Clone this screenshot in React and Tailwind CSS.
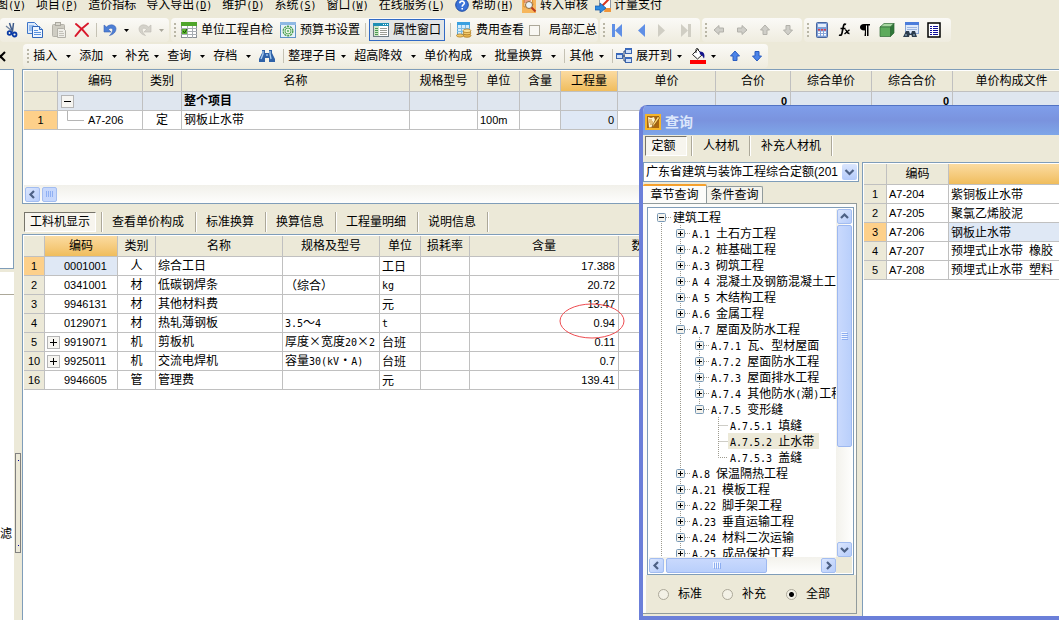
import React from "react";

const FONT = "font-['Liberation_Sans','Noto_Sans_CJK_SC',sans-serif]";

/* ---------- small text helpers ---------- */

function Latin({ children, className = "" }) {
  return (
    <span className={`font-['DejaVu_Sans_Mono',monospace] text-[10px] ${className}`}>{children}</span>
  );
}

function Mixed({ text }) {
  const parts = text.match(/[\x20-\x7e]+|[^\x20-\x7e]+/g) || [];
  return parts.map((part, i) =>
    /^[\x20-\x7e]+$/.test(part) ? (
      <Latin key={i} className="whitespace-pre">{part}</Latin>
    ) : (
      <span key={i} className="font-['Noto_Sans_CJK_SC',sans-serif]">{part}</span>
    )
  );
}

/* ---------- icons ---------- */

function Svg({ w = 16, h = 16, children, label }) {
  return (
    <svg width={w} height={h} viewBox={`0 0 ${w} ${h}`} className="shrink-0" aria-hidden={!label} aria-label={label}>
      {children}
    </svg>
  );
}

const Arrow = ({ color = "#000" }) => (
  <Svg w={5} h={3}><path d="M0 0h5L2.5 3z" fill={color} /></Svg>
);

const CutIcon = () => (
  <Svg>
    <path d="M5.500 1l3 9M9.500 1l-1 8" stroke="#3c5a8c" strokeWidth="1.500" fill="none" />
    <path d="M2 4l6 5" stroke="#6b7f9e" strokeWidth="1.200" />
    <circle cx="5.500" cy="11" r="1.800" fill="none" stroke="#0a3ba6" strokeWidth="1.800" />
    <circle cx="10.500" cy="12.500" r="2" fill="none" stroke="#0a3ba6" strokeWidth="1.800" />
  </Svg>
);
const CopyIcon = () => (
  <Svg>
    <path d="M.5.5h7l3 3v8H.5z" fill="#dceafc" stroke="#3f76c9" />
    <path d="M2 4h5M2 6h6M2 8h6" stroke="#5b93dd" />
    <path d="M5.500 4.500h7l3 3v8h-10z" fill="#eef5ff" stroke="#3066b9" />
    <path d="M12.500 4.500v3h3" fill="#bcd4f5" stroke="#3066b9" />
    <path d="M7 8.500h4M7 10.500h7M7 12.500h7" stroke="#5b93dd" />
  </Svg>
);
const PasteIcon = () => (
  <Svg>
    <rect x="1.500" y="2.500" width="12" height="12" rx="1" fill="#cfcdc3" stroke="#b3b1a8" />
    <rect x="4.500" y=".5" width="5" height="3" fill="#d9d7ce" stroke="#aaa89f" />
    <path d="M6.500 6.500h6l2 2v7h-8z" fill="#efeee8" stroke="#b3b1a8" />
    <path d="M8 9.500h4M8 11.500h5M8 13.500h5" stroke="#c4c2b9" />
  </Svg>
);
const DeleteIcon = () => (
  <Svg>
    <path d="M2 2c4 3 8 7 12 12M14 1.500C9 5 5 9 1.500 14" stroke="#d9182b" strokeWidth="2" fill="none" strokeLinecap="round" />
  </Svg>
);
const UndoIcon = ({ fill = "#4d7fd6", edge = "#3a62b4", flip }) => (
  <Svg w={14}>
    <path
      transform={flip ? "matrix(-1 0 0 1 14 0)" : undefined}
      d="M1 3v7h7L5.500 7.500C8 5 10.500 6.500 9.500 9 9.200 10.500 8 12 6.500 13.500c4-1 6.500-3.500 6.500-7C12.500 2.500 7 1.500 3.500 5z"
      fill={fill} stroke={edge} strokeWidth=".6"
    />
  </Svg>
);
const CheckSheetIcon = () => (
  <Svg>
    <rect x=".5" y=".5" width="15" height="15" fill="#fff" stroke="#8a8f94" />
    <rect x="0" y="0" width="16" height="4" fill="#4fa52b" />
    <path d="M0 6.500h16M0 9.500h16M0 12.500h16M6.500 4v12M11.500 4v12" stroke="#a7adb2" />
    <rect x="1" y="7" width="5" height="5" fill="#5cb531" />
    <path d="M2 9l1.500 2L6 7" stroke="#164f05" fill="none" />
  </Svg>
);
const GearSheetIcon = () => (
  <Svg>
    <rect x=".5" y=".5" width="15" height="15" fill="#e6f1fa" stroke="#5f93c6" />
    <rect x="0" y="0" width="16" height="3" fill="#8fb9e4" />
    <circle cx="8" cy="9" r="4.800" fill="#e8f6e4" stroke="#4a9d52" strokeWidth="1.400" strokeDasharray="2.200 .8" />
    <circle cx="8" cy="9" r="3" fill="none" stroke="#5aaa61" />
    <circle cx="8" cy="9" r="1" fill="#5aaa61" />
  </Svg>
);
const PropertyIcon = () => (
  <Svg>
    <rect x=".5" y="1.500" width="15" height="13" fill="#fff" stroke="#6d7b84" />
    <rect x="0" y="1" width="16" height="3" fill="#1f8fb5" />
    <path d="M10 2.500h1M12 2.500h1M14 2.500h1" stroke="#fff" />
    <rect x="1" y="4" width="5" height="10" fill="#cfe6c8" />
    <path d="M2 6.500h3M2 8.500h3M2 10.500h3M2 12.500h3" stroke="#4b9a52" />
    <path d="M7 6.500h7M7 8.500h7M7 10.500h7M7 12.500h7" stroke="#9a9c94" />
  </Svg>
);
const FeeIcon = () => (
  <Svg>
    <rect x="1.500" y=".5" width="12" height="12" fill="#d5ecfb" stroke="#57a9dd" />
    <rect x="1" y="0" width="13" height="3" fill="#39a0e0" />
    <path d="M1 6.500h13M1 9.500h13M5.500 3v10M9.500 3v10" stroke="#7cbde6" />
    <ellipse cx="11" cy="13.500" rx="4" ry="1.800" fill="#e8b54e" stroke="#a8741b" strokeWidth=".7" />
    <ellipse cx="11" cy="11" rx="4" ry="1.800" fill="#f3cb6c" stroke="#a8741b" strokeWidth=".7" />
    <ellipse cx="11" cy="8.800" rx="4" ry="1.800" fill="#fbe097" stroke="#a8741b" strokeWidth=".7" />
    <ellipse cx="4" cy="13.500" rx="3.500" ry="1.600" fill="#f3cb6c" stroke="#a8741b" strokeWidth=".7" />
  </Svg>
);
const HelpIcon = () => (
  <Svg w={14} h={14}>
    <circle cx="7" cy="7" r="6.300" fill="#3a72d8" stroke="#1f4ba3" />
    <path d="M4.800 5.300c.2-3 4.700-2.700 4.500 0C9.200 6.800 7.200 6.700 7.200 8.700M7.200 10v1.500" stroke="#fff" strokeWidth="1.600" fill="none" />
  </Svg>
);
const AuditIcon = () => (
  <Svg>
    <rect x="1" y="3" width="14" height="13" fill="#f6b65c" />
    <path d="M3 0h8l1 8-9 2z" fill="#fff4dc" stroke="#d88b2a" />
    <path d="M3 3h7M3 5h6" stroke="#d94f2a" />
    <circle cx="8" cy="8" r="3.500" fill="#e9f3fb" stroke="#8d6a3c" />
    <path d="M10.500 10.500l4 4" stroke="#b93a1c" strokeWidth="2" />
  </Svg>
);
const PayIcon = () => (
  <Svg>
    <rect x="4.500" y=".5" width="11" height="12" fill="#fff" stroke="#8e98a6" />
    <path d="M6 10L14 2" stroke="#d9361e" strokeWidth="2" />
    <path d="M10 11h6v4H9z" fill="#f0953a" />
    <path d="M0 9h5V6l6 5-6 5v-3H0z" fill="#2f8be0" stroke="#1458a8" strokeWidth=".7" />
  </Svg>
);
const NavIcon = ({ bar, right, color }) => (
  <Svg w={12} h={13}>
    <g transform={right ? "matrix(-1 0 0 1 12 0)" : undefined} fill={color}>
      {bar && <rect x="1" y="0" width="3" height="13" />}
      <path d="M11 0v13L4 6.500z" />
    </g>
  </Svg>
);
const ArrowIcon = ({ turn = 0, fill = "#cfcec8", edge = "#b2b1aa" }) => (
  <Svg w={12} h={12}>
    <path transform={`rotate(${turn} 6 6)`} d="M6 1l4.500 5H8v4.500H4V6H1.500z" fill={fill} stroke={edge} />
  </Svg>
);
const CalcIcon = () => (
  <Svg w={14}>
    <rect x="1.500" y=".5" width="11" height="15" rx="1" fill="#7fa0d8" stroke="#48679f" />
    <rect x="3" y="2" width="8" height="3" fill="#e4eefb" />
    {[7, 9.5, 12].map((y) => [3, 6, 9].map((x) => (
      <rect key={`${x}-${y}`} x={x} y={y} width="2" height="1.600" fill={y === 7 ? "#d9404a" : "#fff"} />
    )))}
  </Svg>
);
const FxIcon = () => (
  <Svg w={14}>
    <path d="M9 2.500C6.500 1 6.500 4 5.500 8.500 5 12 4.500 14 2 13M3.500 6.500h5" stroke="#000" strokeWidth="1.700" fill="none" />
    <path d="M8 8c2-1 1.500 4 4.500 3.500M12.500 7.800L7.500 12" stroke="#000" strokeWidth="1.400" fill="none" />
  </Svg>
);
const ParaIcon = () => (
  <Svg w={12} h={14}>
    <path d="M6 7.500C-.5 8-.5 1 5 1h6v1.500H9.500V13H8V2.500H7V13H5.500z" fill="#000" />
  </Svg>
);
const CubeIcon = () => (
  <Svg>
    <path d="M1 5l4-3.500h10L11.500 5z" fill="#a7d8a0" stroke="#2f6a35" strokeWidth=".7" />
    <path d="M1 5h10.500v9.500H1z" fill="#5eab5c" stroke="#2f6a35" strokeWidth=".7" />
    <path d="M11.500 5L15 1.500V11l-3.500 3.500z" fill="#2f7638" stroke="#2f6a35" strokeWidth=".7" />
  </Svg>
);
const FindSheetIcon = () => (
  <Svg>
    <rect x="2.500" y=".5" width="13" height="11" fill="#dfeafa" stroke="#88a5d4" />
    <rect x="2" y="0" width="14" height="3" fill="#4b7ddb" />
    <path d="M4 5.500h10M4 7.500h10" stroke="#9cb6e2" />
    <path d="M3 9h3l1 3h1l1-3h3l2 6H9l-.5-2h-2L6 15H0z" fill="#2d3d4d" />
    <path d="M2 13h2M10 13h2" stroke="#9fc2dc" />
  </Svg>
);
const ListIcon = () => (
  <Svg w={14}>
    <rect x="1" y="1" width="12" height="14" fill="#fff" stroke="#000" strokeWidth="1.500" />
    <path d="M3 4.500h2M6 4.500h5M3 6.500h2M6 6.500h5M3 8.500h2M6 8.500h5M3 10.500h2M6 10.500h5M3 12.500h2M6 12.500h5" stroke="#10109a" />
  </Svg>
);
const BinocularsIcon = () => (
  <Svg>
    <path d="M3 2h3v3h4V2h3v3l3 6v3h-6v-4H6v4H0v-3l3-6z" fill="#2f62a8" />
    <path d="M4 3v3L2 11M11 3v3l1 5" stroke="#a9cdf2" strokeWidth="1.300" fill="none" />
    <path d="M7 6h2v2H7z" fill="#7fa9dc" />
  </Svg>
);
const ExpandIcon = () => (
  <Svg>
    <path d="M5 8h4M8 3v10M8 3h2M8 13h2" stroke="#1e3f77" fill="none" />
    {[[0.5, 5.5], [9.5, 0.5], [9.5, 9.5]].map(([x, y]) => (
      <g key={`${x}-${y}`}>
        <rect x={x} y={y} width="6" height="5" fill="#cfe0f8" stroke="#3a64ac" />
        <rect x={x} y={y} width="6" height="1.500" fill="#3a6cc4" />
      </g>
    ))}
  </Svg>
);
const PaintIcon = () => (
  <Svg>
    <path d="M2.500 6.500l5-5 5 5-5 4.500z" fill="#fff" stroke="#222" />
    <path d="M6 5V1.500C6 0 8.500 0 8.500 2" stroke="#222" fill="none" />
    <path d="M9.500 3.500c4-.5 6 3 4.500 7-1-1-1.500-4-4-4z" fill="#12128a" />
    <rect x="0" y="12" width="16" height="4" fill="#f00" />
  </Svg>
);
const AppIcon = () => (
  <Svg>
    <rect x="1" y="1" width="14" height="14" fill="#a8650f" stroke="#f5b52b" strokeWidth="2" />
    <path d="M3 3l3 1 3-1 1 3-2 7-4 .5z" fill="#fff3cc" />
    <path d="M4 6h3M4 8h4M5 10h3" stroke="#c98a2a" />
    <path d="M13 2L8 10l-1 3 2.500-2L14.500 4z" fill="#ffd873" stroke="#6b3a05" strokeWidth=".6" />
  </Svg>
);

function ExpandBox({ open }) {
  return (
    <Svg w={9} h={9}>
      <rect x=".5" y=".5" width="8" height="8" rx="1" fill="#f4f2ec" stroke="#7898b5" />
      <path d={open ? "M2 4.500h5" : "M2 4.500h5M4.500 2v5"} stroke="#000" />
    </Svg>
  );
}
function GridBox({ open }) {
  return (
    <Svg w={13} h={13}>
      <rect x=".5" y=".5" width="12" height="12" fill="#f6f5f1" stroke="#b5b5b5" />
      <path d={open ? "M3 6.500h7" : "M3 6.500h7M6.500 3v7"} stroke="#000" />
    </Svg>
  );
}

/* ---------- menu and toolbars ---------- */

const MENUS = [
  { text: "图", key: "V" },
  { text: "项目", key: "P" },
  { text: "造价指标" },
  { text: "导入导出", key: "D" },
  { text: "维护", key: "D" },
  { text: "系统", key: "S" },
  { text: "窗口", key: "W" },
  { text: "在线服务", key: "L" },
  { text: "帮助", key: "H", icon: HelpIcon },
  { text: "转入审核", icon: AuditIcon },
  { text: "计量支付", icon: PayIcon },
];

function MenuBar() {
  return (
    <nav className="-ml-1 flex h-[18px] shrink-0 items-end gap-[10px] pb-[7px]">
      {MENUS.map(({ text, key, icon: Icon }, i) => (
        <button key={i} type="button" className={`flex h-3 shrink-0 items-center gap-[3px] leading-3 ${Icon && !key ? "-ml-[3px]" : ""}`}>
          {Icon && <Icon />}
          <span>
            {text}
            {key && <Latin>(<u>{key}</u>)</Latin>}
          </span>
        </button>
      ))}
    </nav>
  );
}

const Grip = () => (
  <span className="h-[14px] w-[2px] shrink-0 bg-[repeating-linear-gradient(#b9b6a6_0_2px,transparent_2px_4px)]" />
);
const Sep = () => <span className="h-[14px] w-px shrink-0 bg-[#c5c2b4]" />;

function Band({ children, className = "" }) {
  return (
    <div className={`flex h-6 shrink-0 items-center rounded-sm bg-linear-to-b from-[#fbfaf7] to-[#efecdf] ${className}`}>
      {children}
    </div>
  );
}

function Tool({ label, children, className = "" }) {
  return (
    <button type="button" aria-label={label} className={`flex h-5 shrink-0 items-center justify-center ${className}`}>
      {children}
    </button>
  );
}

function MainToolbar() {
  return (
    <div className="flex shrink-0 gap-[2px]">
      <Band className="w-[169px] pl-[2px]">
        <Tool label="剪切" className="w-[20px]"><CutIcon /></Tool>
        <Tool label="复制" className="w-[25px]"><CopyIcon /></Tool>
        <Tool label="粘贴" className="w-[23px]"><PasteIcon /></Tool>
        <Tool label="删除" className="w-[23px]"><DeleteIcon /></Tool>
        <span className="w-[3px]" />
        <Sep />
        <Tool label="撤销" className="w-[34px] gap-[7px] pl-1"><UndoIcon /><Arrow /></Tool>
        <Tool label="重做" className="w-[36px] gap-[7px] pl-1"><UndoIcon flip fill="#d4d2ca" edge="#bdbbb2" /><Arrow color="#a9a79b" /></Tool>
      </Band>
      <Band className="w-[427px] gap-[5px] pl-[3px]">
        <Grip />
        <Tool className="gap-1"><CheckSheetIcon />单位工程自检</Tool>
        <Tool className="gap-1 pl-[2px]"><GearSheetIcon />预算书设置</Tool>
        <Sep />
        <button type="button" aria-pressed="true" className="-ml-[2px] flex h-[22px] shrink-0 items-center gap-1 border border-[#316ac5] bg-[#e2e5e6] px-[3px]">
          <PropertyIcon />属性窗口
        </button>
        <Sep />
        <Tool className="gap-1"><FeeIcon />费用查看</Tool>
        <label className="flex items-center gap-[9px]">
          <input type="checkbox" className="size-[11px] shrink-0 appearance-none border border-[#aca899] bg-[#f8f7f2]" />
          局部汇总
        </label>
      </Band>
      <Band className="w-[100px] gap-[11px] pl-[3px]">
        <Grip />
        <Tool label="首条" className="-ml-[5px]"><NavIcon bar color="#5f8fe6" /></Tool>
        <Tool label="上一条"><NavIcon color="#5f8fe6" /></Tool>
        <Tool label="下一条"><NavIcon right color="#d0cec4" /></Tool>
        <Tool label="末条"><NavIcon bar right color="#d0cec4" /></Tool>
      </Band>
      <Band className="w-[100px] gap-[11px] pl-[3px]">
        <Grip />
        <Tool label="左移" className="-ml-[5px]"><ArrowIcon turn={270} /></Tool>
        <Tool label="右移"><ArrowIcon turn={90} /></Tool>
        <Tool label="上移"><ArrowIcon /></Tool>
        <Tool label="下移"><ArrowIcon turn={180} /></Tool>
      </Band>
      <Band className="w-[147px] gap-[8px] pl-[3px]">
        <Grip />
        <Tool label="计算器" className="-ml-[2px]"><CalcIcon /></Tool>
        <Tool label="函数"><FxIcon /></Tool>
        <Tool label="段落"><ParaIcon /></Tool>
        <Tool label="三维"><CubeIcon /></Tool>
        <Tool label="查找"><FindSheetIcon /></Tool>
        <Tool label="列表"><ListIcon /></Tool>
      </Band>
    </div>
  );
}

function DropTool({ text, tight, icon }) {
  return (
    <button type="button" className={`flex h-5 shrink-0 items-center pr-2 ${tight ? "gap-[5px]" : "gap-[9px]"}`}>
      <span className="flex items-center gap-1">{icon}{text}</span>
      <Arrow />
    </button>
  );
}

function EditToolbar() {
  return (
    <div className="mt-[2px] flex shrink-0">
      <button type="button" aria-label="关闭" className="flex w-[23px] shrink-0 items-center">
        <Svg w={6} h={11}><path d="M-4 1l9 9M5 1l-9 9" stroke="#000" strokeWidth="2" /></Svg>
      </button>
      <Band className="w-[745px] pl-1">
        <Grip />
        <span className="w-[6px]" />
        <DropTool text="插入" />
        <DropTool text="添加" />
        <DropTool text="补充" tight />
        <DropTool text="查询" />
        <DropTool text="存档" />
        <Tool label="查找" className="w-6 pr-2"><BinocularsIcon /></Tool>
        <Sep />
        <span className="w-[6px]" />
        <DropTool text="整理子目" tight />
        <DropTool text="超高降效" />
        <DropTool text="单价构成" />
        <DropTool text="批量换算" />
        <Sep />
        <span className="w-[6px]" />
        <DropTool text="其他" tight />
        <Sep />
        <span className="w-[5px]" />
        <DropTool text="展开到" tight icon={<ExpandIcon />} />
        <DropTool text="" tight icon={<PaintIcon />} />
        <Tool label="上移" className="w-[22px]"><ArrowIcon fill="#4c84e8" edge="#2a5cc0" /></Tool>
        <Tool label="下移" className="w-[22px]"><ArrowIcon turn={180} fill="#4c84e8" edge="#2a5cc0" /></Tool>
      </Band>
    </div>
  );
}

/* ---------- grids ---------- */

const CELL = "border-r border-b border-[#c0c0c0] p-0 overflow-hidden whitespace-nowrap";
const HEAD = "bg-[#ece9d8] font-normal";
const HOT = "bg-linear-to-b from-[#fbdba0] to-[#f0bd5c] font-normal";
const NUM = "text-[11px]";

const TOP_COLS = [
  ["", "w-[34px]"], ["编码", "w-[85px]"], ["类别", "w-[39px]"], ["名称", "w-[228px]"],
  ["规格型号", "w-[68px]"], ["单位", "w-[42px]"], ["含量", "w-[41px]"], ["工程量", "w-[57px]"],
  ["单价", "w-[98px]"], ["合价", "w-[75px]"], ["综合单价", "w-[81px]"], ["综合合价", "w-[81px]"],
  ["单价构成文件", "w-[118px]"],
];

function HeadRow({ cols, hot }) {
  return (
    <thead>
      <tr className="h-[21px]">
        {cols.map(([name, width], i) => (
          <th key={i} scope="col" className={`${CELL} ${width} ${i === hot ? HOT : HEAD}`}>{name}</th>
        ))}
      </tr>
    </thead>
  );
}

function ScrollButton({ dir }) {
  const paths = { left: "M8 3L4.500 6.500 8 10", right: "M5 3l3.500 3.500L5 10", up: "M3 8l3.500-3.500L10 8", down: "M3 5l3.500 3.500L10 5" };
  return (
    <button type="button" aria-label={dir} className="flex size-[15px] shrink-0 items-center justify-center rounded-xs border border-[#a3bdf0] bg-linear-to-br from-[#dbe6fd] to-[#b7cdfb]">
      <Svg w={13} h={13}><path d={paths[dir]} stroke="#4d6185" strokeWidth="2.200" fill="none" /></Svg>
    </button>
  );
}

function TopGrid() {
  const sums = ["", "", "", "", "", "0", "", "0", ""];
  return (
    <section className="flex h-[135px] shrink-0 flex-col overflow-hidden border-y border-l border-[#7f9db9] bg-white pt-px pl-px">
      <table className="w-[1047px] table-fixed border-separate border-spacing-0">
        <HeadRow cols={TOP_COLS} hot={7} />
        <tbody>
          <tr className="h-[19px] bg-[#dfe6ef] font-bold">
            <td className={`${CELL} ${HEAD}`} />
            <td className={CELL}><div className="flex pl-[3px]"><GridBox open /></div></td>
            <td className={CELL} />
            <td className={`${CELL} pl-[2px]`}>整个项目</td>
            {sums.map((v, i) => <td key={i} className={`${CELL} ${NUM} pr-[3px] text-right`}>{v}</td>)}
          </tr>
          <tr className="h-[19px]">
            <td className={`${CELL} ${NUM} bg-[#fdd08a] text-center`}>1</td>
            <td className={CELL}>
              <div className="flex h-[18px] items-center gap-[4px] pl-[9px]">
                <Svg w={17} h={18}><path d="M.5 0v9.500H17" stroke="#b5b5b5" fill="none" /></Svg>
                <span className={NUM}>A7-206</span>
              </div>
            </td>
            <td className={`${CELL} text-center`}>定</td>
            <td className={`${CELL} pl-[2px]`}>钢板止水带</td>
            <td className={CELL} />
            <td className={`${CELL} ${NUM} pl-[2px]`}>100m</td>
            <td className={CELL} />
            <td className={`${CELL} ${NUM} bg-[#dfe8f5] pr-[3px] text-right`}>0</td>
            {[0, 1, 2, 3, 4].map((i) => <td key={i} className={CELL} />)}
          </tr>
        </tbody>
      </table>
      <div className="mt-auto flex h-[18px] items-center gap-[2px] bg-linear-to-b from-[#f1f0ea] to-[#fefefd] pl-px">
        <ScrollButton dir="left" />
        <span className="flex size-[15px] items-center justify-center rounded-xs border border-[#a3bdf0] bg-[#c6d7fc]">
          <Svg w={9} h={7}><path d="M1.500 0v6M3.500 0v6M5.500 0v6M7.500 0v6" stroke="#8fb0f3" /></Svg>
        </span>
      </div>
    </section>
  );
}

const PRESSED = "border border-[#fff] border-t-[#76746a] border-l-[#76746a] bg-[#f7f5ee]";
const DIVIDED = "border-r border-[#aca899] shadow-[1px_0_#fff]";

function DetailTabs() {
  return (
    <div role="tablist" className="flex h-[30px] shrink-0 items-end pb-[2px] pl-[2px]">
      <button type="button" role="tab" aria-selected="true" className={`h-5 w-[72px] ${PRESSED}`}>工料机显示</button>
      <span className={`h-5 w-[6px] ${DIVIDED}`} />
      {["查看单价构成", "标准换算", "换算信息", "工程量明细", "说明信息"].map((t) => (
        <button key={t} type="button" role="tab" className={`h-5 shrink-0 pr-[11px] pl-[10px] ${DIVIDED}`}>{t}</button>
      ))}
    </div>
  );
}

const DETAIL_COLS = [
  ["", "w-[21px]"], ["编码", "w-[73px]"], ["类别", "w-[38px]"], ["名称", "w-[127px]"],
  ["规格及型号", "w-[97px]"], ["单位", "w-[41px]"], ["损耗率", "w-[49px]"], ["含量", "w-[149px]"],
  ["数量", "w-[50px]"], ["", "w-[390px]"],
];

const DETAIL_ROWS = [
  ["1", false, "0001001", "人", "综合工日", "", "工日", "17.388"],
  ["2", false, "0341001", "材", "低碳钢焊条", "（综合）", "kg", "20.72"],
  ["3", false, "9946131", "材", "其他材料费", "", "元", "13.47"],
  ["4", false, "0129071", "材", "热轧薄钢板", "3.5～4", "t", "0.94"],
  ["5", true, "9919071", "机", "剪板机", "厚度×宽度20×2", "台班", "0.11"],
  ["10", true, "9925011", "机", "交流电焊机", "容量30(kV·A)", "台班", "0.7"],
  ["16", false, "9946605", "管", "管理费", "", "元", "139.41"],
];

function DetailGrid() {
  return (
    <section className="relative min-h-0 flex-1 overflow-hidden border-t border-l border-[#7f9db9] bg-white pt-px pl-px">
      <table className="w-[1035px] table-fixed border-separate border-spacing-0">
        <HeadRow cols={DETAIL_COLS} hot={1} />
        <tbody>
          {DETAIL_ROWS.map(([no, parent, code, kind, name, spec, unit, amount], i) => (
            <tr key={no} className="h-[19px]">
              <td className={`${CELL} ${NUM} text-center ${i === 0 ? "bg-[#fdd08a]" : "bg-[#ece9d8]"}`}>{no}</td>
              <td className={`${CELL} ${i === 0 ? "bg-[#dfe8f5]" : ""}`}>
                <div className="flex h-[18px] items-center pl-[2px]">
                  <span className="w-[17px]">{parent && <GridBox />}</span>
                  <span className={NUM}>{code}</span>
                </div>
              </td>
              <td className={`${CELL} text-center`}>{kind}</td>
              <td className={`${CELL} pl-[2px]`}>{name}</td>
              <td className={`${CELL} pl-[2px]`}><Mixed text={spec} /></td>
              <td className={`${CELL} pl-[2px]`}><Mixed text={unit} /></td>
              <td className={CELL} />
              <td className={`${CELL} ${NUM} pr-[3px] text-right`}>{amount}</td>
              <td className={CELL} />
              <td className={CELL} />
            </tr>
          ))}
        </tbody>
      </table>
      <svg width="66" height="36" viewBox="0 0 66 36" className="absolute top-[68px] left-[536px]" aria-hidden="true">
        <ellipse cx="33" cy="18" rx="32" ry="17" fill="none" stroke="#ee4b50" />
      </svg>
    </section>
  );
}

/* ---------- query dialog ---------- */

const TREE = [
  [0, "open", "建筑工程"],
  [1, "shut", "A.1 土石方工程"],
  [1, "shut", "A.2 桩基础工程"],
  [1, "shut", "A.3 砌筑工程"],
  [1, "shut", "A 4 混凝土及钢筋混凝土工"],
  [1, "shut", "A 5 木结构工程"],
  [1, "shut", "A.6 金属工程"],
  [1, "open", "A.7 屋面及防水工程"],
  [2, "shut", "A.7.1 瓦、型材屋面"],
  [2, "shut", "A.7.2 屋面防水工程"],
  [2, "shut", "A.7.3 屋面排水工程"],
  [2, "shut", "A.7.4 其他防水(潮)工程"],
  [2, "open", "A.7.5 变形缝"],
  [3, "leaf", "A.7.5.1 填缝"],
  [3, "leaf", "A.7.5.2 止水带"],
  [3, "last", "A.7.5.3 盖缝"],
  [1, "shut", "A.8 保温隔热工程"],
  [1, "shut", "A.21 模板工程"],
  [1, "shut", "A.22 脚手架工程"],
  [1, "shut", "A.23 垂直运输工程"],
  [1, "shut", "A.24 材料二次运输"],
  [1, "shut", "A.25 成品保护工程"],
];

function Guide({ d }) {
  return (
    <Svg w={19} h={16}><path d={d} stroke="#9c9a8e" strokeDasharray="1 1" fill="none" /></Svg>
  );
}

function TreeRow({ depth, state, text }) {
  const chosen = text.startsWith("A.7.5.2");
  const branch = state === "open" || state === "shut";
  return (
    <li className="flex h-4 items-center whitespace-nowrap">
      {Array.from({ length: depth }, (_, i) => (
        <Guide key={i} d={i === 2 ? "" : "M9.500 0v16"} />
      ))}
      {branch ? (
        <span className="grid w-[19px] shrink-0 place-items-center">
          <span className="col-start-1 row-start-1">
            <Guide d={depth === 0 ? "M9.500 8v8M14 8.500h5" : depth === 2 && state === "open" ? "M9.500 0v8M14 8.500h5" : "M9.500 0v16M14 8.500h5"} />
          </span>
          <span className="col-start-1 row-start-1"><ExpandBox open={state === "open"} /></span>
        </span>
      ) : (
        <Guide d={state === "last" ? "M9.500 0v8.500H19" : "M9.500 0v16M9.500 8.500H19"} />
      )}
      <span className={`h-4 px-[2px] leading-4 ${chosen ? "bg-[#ece9d8] pr-[5px]" : ""}`}><Mixed text={text} /></span>
    </li>
  );
}

function ChapterTree() {
  return (
    <div className="flex min-h-0 flex-1 flex-col border border-[#7f9db9] bg-white p-px">
      <div className="flex min-h-0 flex-1">
        <ul className="min-w-0 flex-1 overflow-hidden pl-[3px]">
          {TREE.map(([depth, state, text]) => <TreeRow key={text} depth={depth} state={state} text={text} />)}
        </ul>
        <div className="flex w-4 shrink-0 flex-col items-center bg-linear-to-r from-[#f3f2ec] to-[#fefefd]">
          <ScrollButton dir="up" />
          <span className="mt-px flex h-[222px] w-[15px] items-center justify-center rounded-xs border border-[#9db8f0] bg-linear-to-r from-[#c9d9fd] to-[#b9cffb]">
            <Svg w={7} h={8}><path d="M0 .5h6M0 2.500h6M0 4.500h6M0 6.500h6" stroke="#eef4ff" /><path d="M1 1.500h6M1 3.500h6M1 5.500h6M1 7.500h6" stroke="#8cadf0" /></Svg>
          </span>
          <span className="flex-1" />
          <ScrollButton dir="down" />
        </div>
      </div>
      <div className="flex h-4 shrink-0 bg-[#ece9d8]">
        <div className="flex flex-1 items-center gap-[2px] bg-linear-to-b from-[#f3f2ec] to-[#fefefd]">
          <ScrollButton dir="left" />
          <span className="flex h-[15px] w-[101px] items-center justify-center rounded-xs border border-[#9db8f0] bg-linear-to-b from-[#c9d9fd] to-[#b9cffb]">
            <Svg w={8} h={7}><path d="M.5 0v6M2.500 0v6M4.500 0v6M6.500 0v6" stroke="#eef4ff" /><path d="M1.500 1v6M3.500 1v6M5.500 1v6M7.500 1v6" stroke="#8cadf0" /></Svg>
          </span>
          <span className="flex-1" />
          <ScrollButton dir="right" />
        </div>
        <span className="w-4" />
      </div>
    </div>
  );
}

const RESULTS = [
  ["A7-204", "紫铜板止水带"],
  ["A7-205", "聚氯乙烯胶泥"],
  ["A7-206", "钢板止水带"],
  ["A7-207", "预埋式止水带 橡胶"],
  ["A7-208", "预埋式止水带 塑料"],
];

function QueryDialog() {
  return (
    <section role="dialog" aria-labelledby="query-title" className="absolute top-[105px] right-0 bottom-0 left-[639px] flex flex-col overflow-hidden rounded-tl-lg border-b-4 border-l-4 border-[#6b7fd9] bg-[#ece9d8]">
      <header className="-ml-1 flex h-[30px] shrink-0 items-center gap-1 border-t border-[#5273c4] bg-linear-to-b from-[#7f9eea] via-[#7a93de] to-[#7ea6e8] pt-[2px] pl-[6px]">
        <AppIcon />
        <h2 id="query-title" className="text-[14px] leading-4 font-bold text-[#dbe6fb]">查询</h2>
      </header>
      <div role="tablist" className="flex h-[27px] shrink-0 pt-[1px] pl-[2px]">
        <button type="button" role="tab" aria-selected="true" className={`h-5 w-[42px] pr-[5px] ${PRESSED}`}>定额</button>
        <span className={`h-5 w-[5px] ${DIVIDED}`} />
        {["人材机", "补充人材机"].map((t) => (
          <button key={t} type="button" role="tab" className={`h-5 pr-[10px] pl-[11px] ${DIVIDED}`}>{t}</button>
        ))}
      </div>
      <div className="flex min-h-0 flex-1 gap-[3px]">
        <div className="flex w-[216px] shrink-0 flex-col">
          <div className="grid h-5 shrink-0 items-center">
            <select aria-label="定额库" className="col-start-1 row-start-1 h-5 w-full appearance-none border border-[#7f9db9] bg-white pr-5 pl-[2px] leading-4">
              <option>广东省建筑与装饰工程综合定额(201</option>
            </select>
            <span className="pointer-events-none col-start-1 row-start-1 mr-[2px] flex h-4 w-[15px] items-center justify-center justify-self-end rounded-xs bg-linear-to-b from-[#dbe6fd] to-[#b3cafa]">
              <Svg w={11} h={8}><path d="M1.500 2l4 4 4-4" stroke="#4d6185" strokeWidth="2.200" fill="none" /></Svg>
            </span>
          </div>
          <div role="tablist" className="mt-[2px] flex h-[19px] shrink-0 items-end">
            <button type="button" role="tab" aria-selected="true" className="h-[19px] w-[64px] rounded-t-xs border-t-2 border-r border-t-[#f5a02c] border-r-[#919b9c] bg-[#fcfcfa]">章节查询</button>
            <button type="button" role="tab" className="h-[17px] w-[56px] rounded-t-xs border-t border-r border-[#919b9c] bg-[#f4f3ed]">条件查询</button>
          </div>
          <div className="mr-[2px] mb-[2px] flex min-h-0 flex-1 flex-col border-t border-r border-b border-[#919b9c] bg-[#fcfcfa] pt-[3px] pr-[2px] pl-1">
            <ChapterTree />
            <div className="-mr-[2px] -ml-px flex h-[38px] shrink-0 items-center bg-[#ece9d8] pl-3">
              {["标准", "补充", "全部"].map((t) => (
                <label key={t} className="flex w-16 items-center gap-[9px]">
                  <input type="radio" name="scope" defaultChecked={t === "全部"} className="size-[11px] appearance-none rounded-full border border-[#aca899] bg-[#f3f1e6] checked:bg-[radial-gradient(circle,#000_0_2px,#f3f1e6_3px)]" />
                  {t}
                </label>
              ))}
            </div>
          </div>
        </div>
        <div className="min-w-0 flex-1 overflow-hidden border-t border-l border-[#7f9db9] bg-white pt-px pl-px">
          <table className="w-[540px] table-fixed border-separate border-spacing-0">
            <HeadRow cols={[["", "w-[23px]"], ["编码", "w-[62px]"], ["", "w-[455px]"]]} hot={2} />
            <tbody>
              {RESULTS.map(([code, name], i) => (
                <tr key={code} className="h-[19px]">
                  <td className={`${CELL} ${NUM} text-center ${i === 2 ? "bg-[#fdd08a]" : "bg-[#ece9d8]"}`}>{i + 1}</td>
                  <td className={`${CELL} ${NUM} pl-[2px]`}>{code}</td>
                  <td className={`${CELL} pl-[2px] ${i === 2 ? "bg-[#dfe8f5]" : ""}`}><Mixed text={name} /></td>
                </tr>
              ))}
            </tbody>
          </table>
        </div>
      </div>
    </section>
  );
}

/* ---------- page ---------- */

export default function App() {
  return (
    <div className={`relative flex h-screen flex-col overflow-hidden bg-[#ece9d8] text-[12px] leading-4 whitespace-nowrap text-black ${FONT}`}>
      <MenuBar />
      <MainToolbar />
      <EditToolbar />
      <main className="mt-px flex min-h-0 flex-1">
        <aside className="flex w-[14px] shrink-0 flex-col">
          <div className="h-[200px] border-y border-r border-[#7f9db9] bg-white" />
          <div className="mt-[3px] h-[23px] border-b border-[#aca899] bg-white" />
          <div className="flex flex-1 flex-col justify-end overflow-hidden bg-white pb-[78px]">滤</div>
        </aside>
        <div className="flex w-2 shrink-0 flex-col items-center justify-end pb-[67px]">
          <div className="flex h-[100px] w-[6px] flex-col items-center justify-between border border-[#808080] bg-[#ece9d8] py-[6px]">
            <span className="size-px bg-[#0000a0]" />
            <span className="size-px bg-[#0000a0]" />
          </div>
        </div>
        <div className="flex min-w-0 flex-1 flex-col">
          <TopGrid />
          <DetailTabs />
          <DetailGrid />
        </div>
      </main>
      <QueryDialog />
    </div>
  );
}
